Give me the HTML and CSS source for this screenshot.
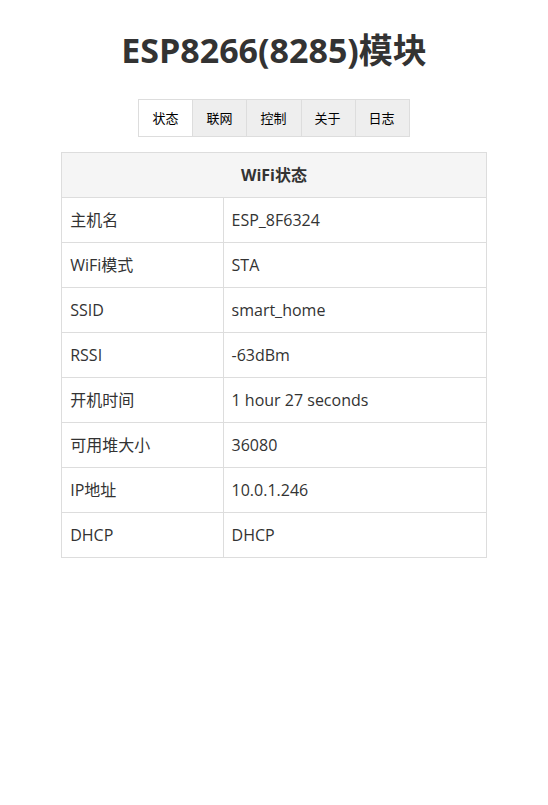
FILE: index.html
```html
<!DOCTYPE html>
<html lang="zh-CN">
<head>
<meta charset="utf-8">
<meta name="viewport" content="width=device-width, initial-scale=1">
<title>ESP8266(8285)模块</title>
<link rel="stylesheet" href="styles.css">
</head>
<body>
<main class="page">
<h1 class="title">ESP8266(8285)模块</h1>
<nav class="tabs">
<button type="button" class="tab active">状态</button>
<button type="button" class="tab">联网</button>
<button type="button" class="tab">控制</button>
<button type="button" class="tab">关于</button>
<button type="button" class="tab">日志</button>
</nav>
<table class="status">
<thead><tr><th colspan="2">WiFi状态</th></tr></thead>
<tbody>
<tr><td>主机名</td><td>ESP_8F6324</td></tr>
<tr><td>WiFi模式</td><td>STA</td></tr>
<tr><td>SSID</td><td>smart_home</td></tr>
<tr><td>RSSI</td><td>-63dBm</td></tr>
<tr><td>开机时间</td><td>1 hour 27 seconds</td></tr>
<tr><td>可用堆大小</td><td>36080</td></tr>
<tr><td>IP地址</td><td>10.0.1.246</td></tr>
<tr><td>DHCP</td><td>DHCP</td></tr>
</tbody>
</table>
</main>
</body>
</html>
```
FILE: styles.css
```css
* { box-sizing: border-box; }
body {
  margin: 0;
  background: #fff;
  color: #333;
  font-family: "Open Sans", "Noto Sans CJK SC", sans-serif;
  font-size: 16px;
  line-height: 28px;
}
.page {
  display: flex;
  flex-direction: column;
  align-items: center;
  padding: 28px 8px;
}
.title {
  margin: 0 0 27px;
  font-size: 34px;
  line-height: 44px;
}
.tabs {
  display: flex;
  margin-bottom: 15px;
  border: 1px solid #ddd;
}
.tab {
  padding: 0 14px 0 13px;
  border: 0;
  background: #eee;
  color: #000;
  font-family: inherit;
  font-size: 13px;
  line-height: 36px;
}
.tab + .tab { border-left: 1px solid #ddd; }
.tab.active { background: #fff; }
.status {
  width: 80%;
  border-collapse: collapse;
}
.status th,
.status td {
  height: 45px;
  padding: 8px;
  border: 1px solid #ddd;
  text-align: left;
}
.status th {
  background: #f5f5f5;
  text-align: center;
}
.status td:first-child { width: 38%; }
```
